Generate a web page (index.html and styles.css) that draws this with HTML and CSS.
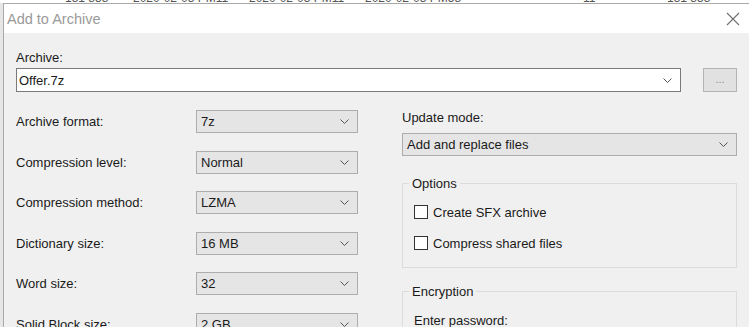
FILE: index.html
```html
<!DOCTYPE html>
<html lang="en">
<head>
    <meta charset="UTF-8">
    <title>Add to Archive</title>
    <link rel="stylesheet" href="styles.css">
</head>
<body>

    <!-- list view behind the dialog, only its bottom edge shows -->
    <div class="backdrop">
        <div class="backdrop-row">
            <span class="c-size">181 858</span>
            <span class="c-date">2020-02-03 PM11</span>
            <span class="c-date">2020-02-03 PM11</span>
            <span class="c-date last">2020-02-03 PM58</span>
            <span class="c-num">11</span>
            <span class="c-size">181 858</span>
        </div>
    </div>

    <div class="window">
        <div class="titlebar">
            <span class="title">Add to Archive</span>
            <svg class="close" width="14" height="14" viewBox="0 0 14 14">
                <path d="M1 1 L13 13 M13 1 L1 13" stroke="#707070" stroke-width="1.1" fill="none"/>
            </svg>
        </div>

        <div class="content">
            <div class="label">Archive:</div>
            <div class="archive-row">
                <div class="combo edit">
                    <span>Offer.7z</span>
                    <svg class="chev" width="9" height="5" viewBox="0 0 9 5"><path d="M0.5 0.5 L4.5 4.5 L8.5 0.5" stroke="#555" fill="none"/></svg>
                </div>
                <div class="browse">...</div>
            </div>

            <div class="columns">
                <div class="settings">
                    <div class="label">Archive format:</div>
                    <div class="combo"><span>7z</span><svg class="chev" width="9" height="5" viewBox="0 0 9 5"><path d="M0.5 0.5 L4.5 4.5 L8.5 0.5" stroke="#555" fill="none"/></svg></div>

                    <div class="label">Compression level:</div>
                    <div class="combo"><span>Normal</span><svg class="chev" width="9" height="5" viewBox="0 0 9 5"><path d="M0.5 0.5 L4.5 4.5 L8.5 0.5" stroke="#555" fill="none"/></svg></div>

                    <div class="label">Compression method:</div>
                    <div class="combo"><span>LZMA</span><svg class="chev" width="9" height="5" viewBox="0 0 9 5"><path d="M0.5 0.5 L4.5 4.5 L8.5 0.5" stroke="#555" fill="none"/></svg></div>

                    <div class="label">Dictionary size:</div>
                    <div class="combo"><span>16 MB</span><svg class="chev" width="9" height="5" viewBox="0 0 9 5"><path d="M0.5 0.5 L4.5 4.5 L8.5 0.5" stroke="#555" fill="none"/></svg></div>

                    <div class="label">Word size:</div>
                    <div class="combo"><span>32</span><svg class="chev" width="9" height="5" viewBox="0 0 9 5"><path d="M0.5 0.5 L4.5 4.5 L8.5 0.5" stroke="#555" fill="none"/></svg></div>

                    <div class="label">Solid Block size:</div>
                    <div class="combo"><span>2 GB</span><svg class="chev" width="9" height="5" viewBox="0 0 9 5"><path d="M0.5 0.5 L4.5 4.5 L8.5 0.5" stroke="#555" fill="none"/></svg></div>
                </div>

                <div class="side">
                    <div class="label">Update mode:</div>
                    <div class="combo wide"><span>Add and replace files</span><svg class="chev" width="9" height="5" viewBox="0 0 9 5"><path d="M0.5 0.5 L4.5 4.5 L8.5 0.5" stroke="#555" fill="none"/></svg></div>

                    <fieldset class="group options">
                        <legend>Options</legend>
                        <div class="check"><span class="box"></span>Create SFX archive</div>
                        <div class="check"><span class="box"></span>Compress shared files</div>
                    </fieldset>

                    <fieldset class="group encryption">
                        <legend>Encryption</legend>
                        <div class="label">Enter password:</div>
                    </fieldset>
                </div>
            </div>
        </div>
    </div>

</body>
</html>
```

FILE: styles.css
```css
/* General Styling */
body {
    margin: 0;
    width: 749px;
    height: 327px;
    overflow: hidden;
    background: #e6e6e6;
    font-family: 'Liberation Sans', Arial, sans-serif;
    font-size: 13px;
    color: #1a1a1a;
}

/* list behind the dialog */
.backdrop {
    height: 3px;
    overflow: hidden;
    background: #ffffff;
}

.backdrop-row {
    display: flex;
    margin-top: -8px;
    padding-left: 65px;
    font-size: 12px;
    line-height: 12px;
    color: #555;
    white-space: nowrap;
}

.c-size {
    width: 68px;
}

.c-date {
    width: 116px;
}

.c-date.last {
    width: 218px;
}

.c-num {
    width: 84px;
}

/* Dialog window */
.window {
    margin-left: 3px;
    border-top: 1px solid #a9a9a9;
    border-left: 1px solid #a9a9a9;
    background: #f0f0f0;
    height: 400px;
}

.titlebar {
    height: 29px;
    background: #ffffff;
    display: flex;
    align-items: center;
    justify-content: space-between;
    padding: 0 9px 0 3px;
}

.title {
    font-size: 14.5px;
    color: #9a9a9a;
}

.content {
    padding: 17px 12px 0 12px;
}

.label {
    line-height: 15px;
    white-space: nowrap;
}

.archive-row {
    display: flex;
    align-items: center;
    gap: 22px;
    margin-top: 3px;
}

.combo {
    height: 23px;
    box-sizing: border-box;
    border: 1px solid #adadad;
    background: #e5e5e5;
    display: flex;
    align-items: center;
    justify-content: space-between;
    padding: 0 8px 0 4px;
}

.combo.edit {
    width: 665px;
    height: 24px;
    background: #ffffff;
    border-color: #7a7a7a;
    padding-left: 2px;
}

.chev {
    flex-shrink: 0;
}

.browse {
    width: 34px;
    height: 24px;
    box-sizing: border-box;
    border: 1px solid #b4b4b4;
    background: #e1e1e1;
    color: #8a8a8a;
    font-size: 11px;
    display: flex;
    align-items: center;
    justify-content: center;
    padding-bottom: 2px;
}

/* two columns of settings */
.columns {
    display: flex;
    gap: 44px;
    margin-top: 18px;
}

.settings {
    display: grid;
    grid-template-columns: 180px 162px;
    grid-auto-rows: 23px;
    row-gap: 17.6px;
    align-items: center;
}

.side {
    width: 335px;
}

.combo.wide {
    margin-top: 8px;
}

.group {
    margin: 0;
    border: 1px solid #dcdcdc;
    padding: 0 10px 0 11px;
}

.group legend {
    padding: 0 3px;
    margin-left: -5px;
    line-height: 15px;
}

.options {
    margin-top: 20px;
    padding-bottom: 16px;
}

.check {
    display: flex;
    align-items: center;
    height: 16px;
    margin-top: 13px;
}

.check + .check {
    margin-top: 15px;
}

.box {
    width: 14px;
    height: 14px;
    box-sizing: border-box;
    border: 1px solid #333333;
    background: #ffffff;
    margin-right: 5px;
}

.encryption {
    margin-top: 16px;
    padding-top: 14px;
    height: 60px;
}
```
